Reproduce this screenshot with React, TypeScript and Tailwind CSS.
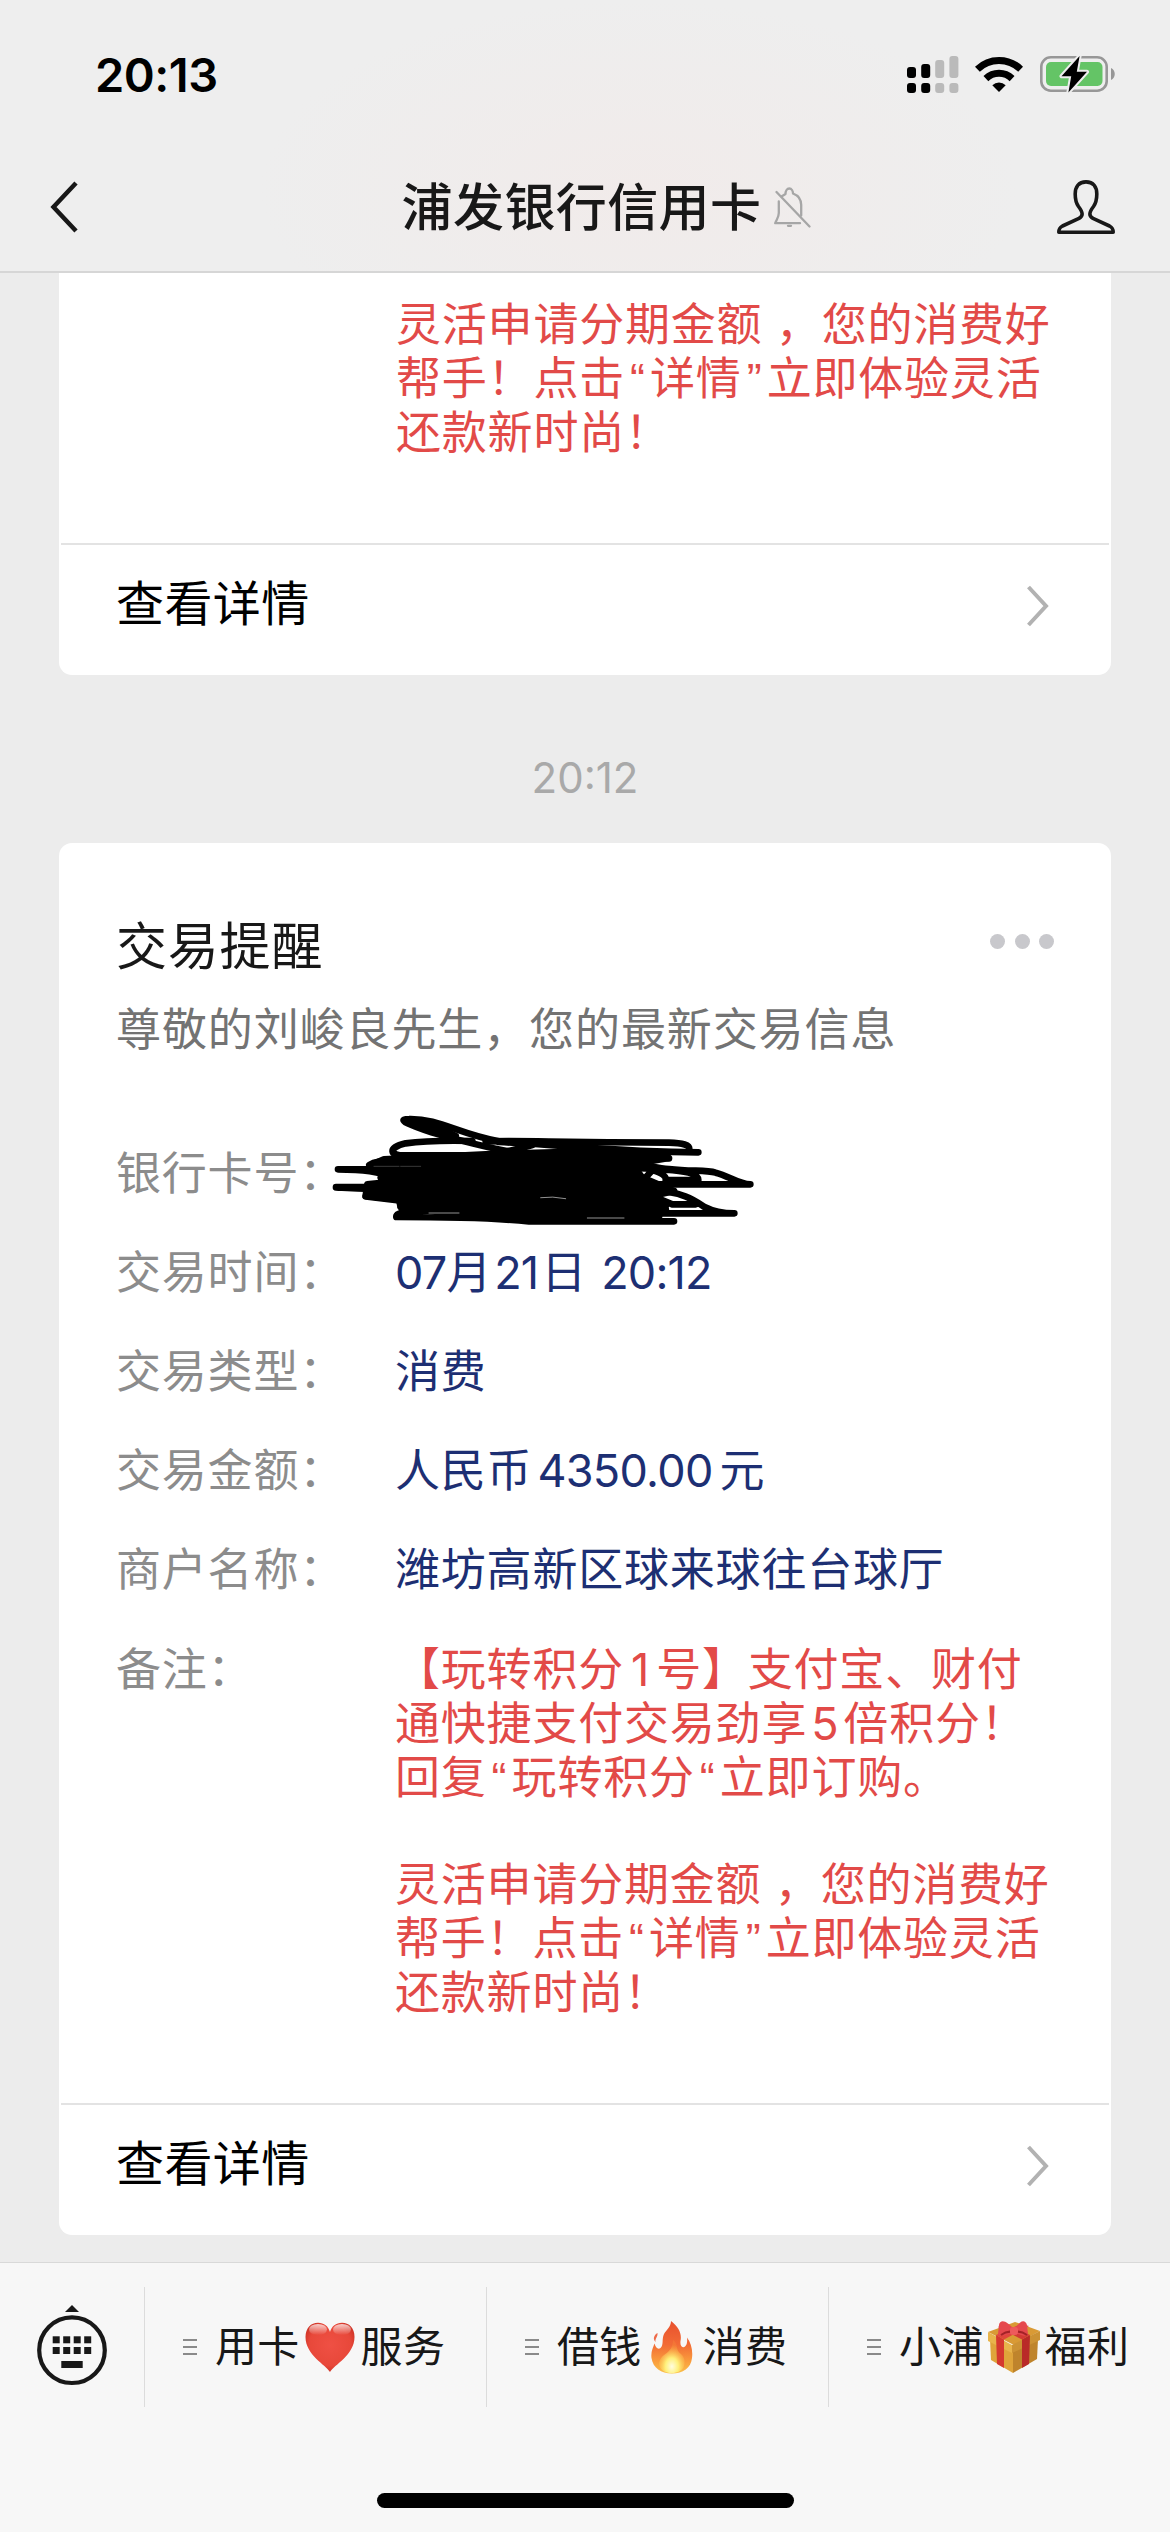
import type { ReactNode } from 'react';

const FONT = "font-['Inter','Noto_Sans_CJK_SC',sans-serif]";

function SignalIcon() {
    return (
        <svg width="52" height="38" viewBox="0 0 52 38">
            <g fill="#000">
                <rect x="0" y="12" width="9" height="11" rx="3" />
                <rect x="14.2" y="9" width="9" height="14" rx="3" />
                <rect x="0" y="28" width="9" height="10" rx="3" />
                <rect x="14.2" y="28" width="9" height="10" rx="3" />
            </g>
            <g fill="#bababa">
                <rect x="28.2" y="5" width="9" height="18" rx="3" />
                <rect x="42.4" y="1" width="9" height="22" rx="3" />
                <rect x="28.2" y="28" width="9" height="10" rx="3" />
                <rect x="42.4" y="28" width="9" height="10" rx="3" />
            </g>
        </svg>
    );
}

function WifiIcon() {
    return (
        <svg width="48" height="36" viewBox="0 0 48 36">
            <g fill="none" stroke="#000" strokeWidth="7">
                <path d="M2.4 13.2A31 31 0 0 1 45.6 13.2" />
                <path d="M10.9 22.6A19 19 0 0 1 37.1 22.6" />
            </g>
            <path d="M17.3 29.2A10 10 0 0 1 30.7 29.2L24 36Z" fill="#000" />
        </svg>
    );
}

function BatteryIcon() {
    return (
        <svg width="76" height="38" viewBox="0 0 76 38">
            <rect x="1.3" y="2.3" width="65.4" height="33.4" rx="9.5" fill="none" stroke="#979797" strokeWidth="2.6" />
            <path d="M71 13c5 2 5 10 0 12z" fill="#979797" />
            <rect x="6" y="7" width="56.5" height="24" rx="5" fill="#64c466" />
            <path
                d="M39.6 1L21.5 21.2H31.2L28.4 37.4L47 16.8H36.8Z"
                fill="#000"
                stroke="#eee"
                strokeWidth="4"
                strokeLinejoin="round"
                paintOrder="stroke"
            />
        </svg>
    );
}

function BellOffIcon() {
    return (
        <svg width="37" height="41" viewBox="0 0 37 41" fill="none" stroke="#a6a6a6" strokeWidth="2.3" strokeLinecap="round" strokeLinejoin="round">
            <path d="M4.8 14.5V26C4.8 30 3 32 1.2 36.2H26" />
            <path d="M7.5 9.5L11.5 7C11.5 4 13 1.5 15.3 1.5C17.6 1.5 19 4 19 6.5C24.5 8.5 27.2 13 27.2 18V28.5" />
            <path d="M14 38.8h3" />
            <path d="M2.5 5L35.5 39.5" />
        </svg>
    );
}

function PersonIcon() {
    return (
        <svg width="58" height="54" viewBox="0 0 58 54" fill="none" stroke="#181818" strokeWidth="3.6" strokeLinejoin="round">
            <path d="M29 1.9C21.5 1.9 18.2 7 18.2 14C18.2 20 19 23 21.5 26.5C26.5 33 26 36 22 38.4L5.5 46C2 48 1.8 49.5 1.8 52.2H56.2C56.2 49.5 56 48 52.5 46L36 38.4C32 36 31.5 33 36.5 26.5C39 23 39.8 20 39.8 14C39.8 7 36.5 1.9 29 1.9Z" />
        </svg>
    );
}

function KeyboardIcon() {
    const cols = [15.7, 26.2, 36.7, 47.2];
    return (
        <svg width="70" height="82" viewBox="0 0 70 82" fill="#181818">
            <path d="M35 0L42 7H28Z" />
            <circle cx="35" cy="45.2" r="32.8" fill="none" stroke="#181818" strokeWidth="4.2" />
            {cols.map(x => <rect key={x} x={x} y="31.3" width="7" height="7" />)}
            {cols.map(x => <rect key={x} x={x} y="42" width="7" height="7" />)}
            <rect x="24.3" y="56" width="21.4" height="7" />
        </svg>
    );
}

function HeartIcon() {
    return (
        <svg width="50" height="51" viewBox="0 0 50 51">
            <defs>
                <radialGradient id="heart" cx="0.5" cy="0.45" r="0.6">
                    <stop offset="0" stopColor="#ef5044" />
                    <stop offset="0.7" stopColor="#e8483a" />
                    <stop offset="1" stopColor="#c92f22" />
                </radialGradient>
                <linearGradient id="shine" x1="0" y1="0" x2="0" y2="1">
                    <stop offset="0" stopColor="#fff" stopOpacity="0.75" />
                    <stop offset="1" stopColor="#fff" stopOpacity="0" />
                </linearGradient>
            </defs>
            <path d="M25 50C21 43 0.5 33 0.5 15C0.5 6 6 0.8 13 0.8C19 0.8 23.5 4.5 25 10C26.5 4.5 31 0.8 37 0.8C44 0.8 49.5 6 49.5 15C49.5 33 29 43 25 50Z" fill="url(#heart)" />
            <ellipse cx="13" cy="7.5" rx="9" ry="5.5" fill="url(#shine)" />
            <ellipse cx="37" cy="7.5" rx="9" ry="5.5" fill="url(#shine)" />
        </svg>
    );
}

function FireIcon() {
    return (
        <svg width="42" height="53" viewBox="0 0 42 53">
            <defs>
                <linearGradient id="fire" x1="0" y1="0" x2="0" y2="1">
                    <stop offset="0" stopColor="#e8502e" />
                    <stop offset="0.45" stopColor="#f26b35" />
                    <stop offset="0.75" stopColor="#f99a3c" />
                    <stop offset="1" stopColor="#fbc04a" />
                </linearGradient>
                <radialGradient id="core" cx="0.5" cy="0.8" r="0.65">
                    <stop offset="0" stopColor="#fffde0" />
                    <stop offset="0.4" stopColor="#fff07a" />
                    <stop offset="1" stopColor="#fba53c" stopOpacity="0.2" />
                </radialGradient>
            </defs>
            <path d="M20 0C28 6 31 13 29.5 20C29 24 30.5 27 33 26C36 25 36.5 20 36 16.500C40 22 42 29 41 37C40 47 32 52.5 21 52.5C10 52.5 2 47 0.5 37C-0.3 31 2 26.5 3.5 22.5C4.5 26.5 7 29 9.5 27C13 24 10.5 18 13 13C15 9 20 6 20 0Z" fill="url(#fire)" />
            <path d="M6.5 12C7 16 4 17 4.5 21C1.5 18 3 14 6.5 12Z" fill="#ee6a4a" />
            <path d="M22 19C28 24 24 29 30 33C35 37 35 47 29 50C24 53 16 53 11 49C6 44 8 38 13 34C19 30 22 26 22 19Z" fill="url(#core)" />
        </svg>
    );
}

function GiftIcon() {
    return (
        <svg width="54" height="53" viewBox="0 0 54 53">
            <path d="M1 11L28 1L53 10L27 24Z" fill="#d99a35" />
            <path d="M3 18L26 30V52L4 39Z" fill="#dfa43a" />
            <path d="M51 18L26 30V52L50 38Z" fill="#bf842c" />
            <path d="M1 11L25 24V32L1 20Z" fill="#e8b44b" />
            <path d="M53 10L25 24V32L53 19Z" fill="#cc9234" />
            <path d="M9 14L17 18.5V47L10 43Z" fill="#d5382f" />
            <path d="M43 14L35 18.5V47L42 43Z" fill="#b92a28" />
            <path d="M9 14L34 3L42 5L17 18.5Z" fill="#e0463c" />
            <path d="M43 14L18 3L11 6L35 18.5Z" fill="#d33a34" />
            <path d="M27 9C20 -1 13 -2 12 4L11 13C13 17 20 13 27 12C34 13 38 17 41 13L40 4C38 -2 33 -1 27 9Z" fill="#e5484d" />
            <path d="M14 14C18 11 22 10 26 11M40 14C36 11 32 10 28 11" fill="none" stroke="#a32227" strokeWidth="2" />
            <rect x="23" y="6" width="8" height="8" rx="3" fill="#ee5a5c" />
        </svg>
    );
}

// hand-drawn strokes that hide the card number
function Scribble() {
    return (
        <svg className="absolute -left-24 -top-[43px]" width="500" height="160" viewBox="0 0 1500 480" fill="none" stroke="#000" strokeWidth="20" strokeLinecap="round" strokeLinejoin="round">
            <path d="M255 235L560 220L900 210L1105 232L1000 250L1030 290L1125 330L1060 345L1100 385L1080 402L860 410L700 415L480 402L305 378L300 355L200 345L205 310L300 300L245 290L300 260L215 252Z" fill="#000" />
            <path d="M650 215C560 200 470 175 400 155C340 135 285 114 330 114C420 112 480 160 600 181" />
            <path d="M470 165C420 140 380 130 350 122" />
            <path d="M520 180C430 178 370 180 320 187C265 200 270 225 320 223L560 222C620 215 650 205 700 192" />
            <path d="M560 181C700 178 740 184 1110 185C1150 186 1175 192 1170 205" />
            <path d="M600 183C800 192 960 214 1198 214M860 202L1000 222L1110 232" />
            <path d="M117 265C190 265 240 270 290 292M117 265H230L320 280M211 252C225 243 240 240 300 240" />
            <path d="M111 319C170 322 220 325 290 325M111 318H230M200 346L300 358" />
            <path d="M960 232C1010 245 1060 262 1110 264C1180 272 1220 266 1250 275C1290 285 1320 310 1354 310H1040" />
            <path d="M1100 266C1160 270 1198 278 1198 297H1100M1030 300L1060 268C1090 275 1100 285 1105 300M980 260L1040 262" />
            <path d="M1060 330C1150 330 1190 360 1215 377C1250 395 1280 397 1306 397H1070M1060 345L1120 370H1190M1060 362L1100 376M1125 330L1060 325" />
            <path d="M480 387C330 390 290 392 292 408C420 408 560 408 690 421H1125" />
            <path d="M305 377L1100 388M560 408H1080" />
            <path d="M725 350Q760 345 800 353M865 411H975M390 396H480" stroke="#ddd" strokeWidth="2" />
            <path d="M225 256H300M305 256H365" stroke="#555" strokeWidth="2" />
        </svg>
    );
}

function Chevron() {
    return (
        <svg width="24" height="42" viewBox="0 0 24 42" fill="none" stroke="#b2b2b2" strokeWidth="4">
            <path d="M2.5 2L20 21L2.5 40" />
        </svg>
    );
}

function DetailLink() {
    return (
        <div className="mx-0.5 flex h-[132px] items-start justify-between border-t-2 border-[#e3e3e3] pl-[55px] pr-[59px] pt-[29px]">
            <span className="text-[48px] leading-[60px] tracking-[0.4px] text-black">查看详情</span>
            <span className="pt-[11px]"><Chevron /></span>
        </div>
    );
}

function Line({ children }: { children?: ReactNode }) {
    return <div className="h-[53.85px] whitespace-pre leading-[53.85px]">{children}</div>;
}

function Quote({ children }: { children: ReactNode }) {
    return <span className="inline-block w-[25px] text-center font-['Liberation_Sans',sans-serif] tracking-normal">{children}</span>;
}

function InstallmentText() {
    return (
        <>
            <Line>灵活申请分期金额 ，您的消费好</Line>
            <Line>帮手！点击<Quote>“</Quote>详情<Quote>”</Quote>立即体验灵活</Line>
            <Line>还款新时尚！</Line>
        </>
    );
}

function Row({ label, children }: { label: string; children: ReactNode }) {
    return (
        <div className="flex h-[99px] items-center">
            <div className="w-[279px] shrink-0 text-[#8c8c8c]">{label}</div>
            <div className="relative h-full whitespace-pre leading-[99px] text-[#1d2f73]">{children}</div>
        </div>
    );
}

const menus = [
    { before: '用卡', icon: <HeartIcon />, after: '服务' },
    { before: '借钱', icon: <FireIcon />, after: '消费' },
    { before: '小浦', icon: <GiftIcon />, after: '福利' },
];

export default function App() {
    return (
        <div lang="zh-CN" className={`flex h-[2532px] w-[1170px] flex-col overflow-hidden bg-[#ececec] ${FONT}`}>
            <header className="h-[273px] shrink-0 border-b-2 border-[#d6d6d6] bg-[#eeeeee] bg-[radial-gradient(ellipse_380px_190px_at_640px_190px,#f1ebea,#eeeeee)]">
                <div className="flex h-[148px] items-center justify-between pl-[95px] pr-[54px]">
                    <span className="text-[47px] font-semibold leading-none tracking-[-0.5px] text-black">20:13</span>
                    <div className="flex items-center">
                        <SignalIcon />
                        <span className="ml-4"><WifiIcon /></span>
                        <span className="ml-[17px]"><BatteryIcon /></span>
                    </div>
                </div>
                <div className="flex h-[118px] items-center justify-between pl-[50px] pr-[55px]">
                    <svg className="w-[62px]" height="52" viewBox="0 0 62 52" fill="none" stroke="#181818" strokeWidth="4.5">
                        <path d="M26 2L3.5 26L26 50" />
                    </svg>
                    <div className="flex items-center gap-[13px] pl-[44px] text-[#181818]">
                        <span className="text-[51px] font-medium leading-none tracking-[0.4px]">浦发银行信用卡</span>
                        <BellOffIcon />
                    </div>
                    <PersonIcon />
                </div>
            </header>

            <main className="flex h-[1989px] shrink-0 flex-col px-[59px] text-[45px] tracking-[0.8px]">
                <section className="rounded-b-[13px] bg-white">
                    <div className="h-[270px] pl-[337px] pt-[25px] text-[#e24a48]">
                        <InstallmentText />
                    </div>
                    <DetailLink />
                </section>

                <div className="flex h-[168px] items-center justify-center pt-9 text-[42px] tracking-normal text-[#a9a9a9]">20:12</div>

                <section className="h-[1392px] rounded-[13px] bg-white">
                    <div className="h-[1260px] px-[57px] pt-[72px]">
                        <div className="flex h-[64px] items-center justify-between">
                            <h2 className="text-[51px] leading-[66px] text-[#181818]">交易提醒</h2>
                            <div className="flex gap-[9.5px] pb-3">
                                <i className="size-[15px] rounded-full bg-[#c8c8cc]" />
                                <i className="size-[15px] rounded-full bg-[#c8c8cc]" />
                                <i className="size-[15px] rounded-full bg-[#c8c8cc]" />
                            </div>
                        </div>
                        <p className="mb-[64px] mt-[21px] h-[60px] leading-[60px] tracking-[0.9px] text-[#737373]">尊敬的刘峻良先生，您的最新交易信息</p>
                        <Row label="银行卡号："><Scribble /></Row>
                        <Row label="交易时间：">
                            <span className="tracking-[-0.8px]">07</span>月
                            <span className="ml-0.5 mr-[3px] tracking-[-0.8px]">21</span>日
                            <span className="ml-3.5 tracking-[-0.8px]">20:12</span>
                        </Row>
                        <Row label="交易类型：">消费</Row>
                        <Row label="交易金额：">人民币<span className="ml-[5px] mr-[7px] tracking-[-0.7px]">4350.00</span>元</Row>
                        <Row label="商户名称：">潍坊高新区球来球往台球厅</Row>
                        <div className="flex pt-[24px]">
                            <div className="w-[279px] shrink-0 leading-[53.85px] text-[#8c8c8c]">备注：</div>
                            <div className="text-[#e24a48]">
                                <Line>【玩转积分<span className="ml-[7px] mr-[6px]">1</span>号】支付宝、财付</Line>
                                <Line>通快捷支付交易劲享<span className="mx-[4px]">5</span>倍积分！</Line>
                                <Line>回复<Quote>“</Quote>玩转积分<Quote>“</Quote>立即订购。</Line>
                                <Line />
                                <InstallmentText />
                            </div>
                        </div>
                    </div>
                    <DetailLink />
                </section>
            </main>

            <footer className="flex h-[270px] shrink-0 flex-col items-center border-t border-[#d9d9d9] bg-[#f7f7f7]">
                <nav className="flex h-[168px] w-full items-center">
                    <div className="flex h-[120px] w-[144px] items-center pb-0.5 pl-[37px]">
                        <KeyboardIcon />
                    </div>
                    {menus.map(m => (
                        <div key={m.before} className="flex h-[120px] w-[342px] items-center border-l border-[#dcdcdc] pl-[38px]">
                            <div className="flex w-[14px] flex-col gap-[5px]">
                                <i className="h-0.5 bg-[#8a8a8a]" />
                                <i className="h-0.5 bg-[#8a8a8a]" />
                                <i className="h-0.5 bg-[#8a8a8a]" />
                            </div>
                            <div className="ml-[18px] flex items-center whitespace-nowrap text-[42px] leading-none tracking-[0.3px] text-[#181818]">
                                {m.before}
                                <span className="flex w-[61px] justify-center">{m.icon}</span>
                                {m.after}
                            </div>
                        </div>
                    ))}
                </nav>
                <div className="mt-[62px] h-[15px] w-[417px] rounded-full bg-black" />
            </footer>
        </div>
    );
}
